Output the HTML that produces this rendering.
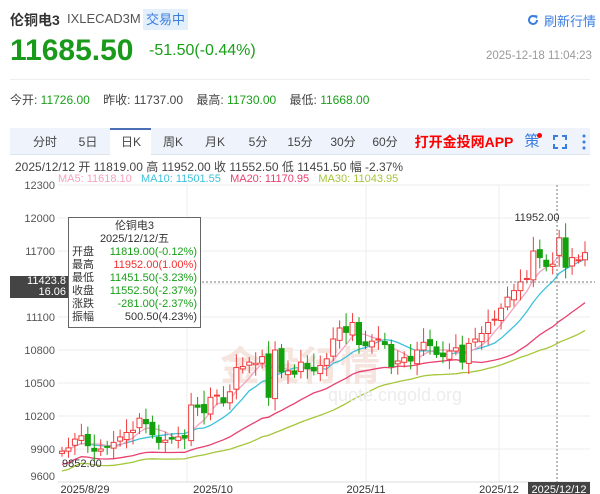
<!DOCTYPE html>
<html><head><meta charset="utf-8"><style>
*{margin:0;padding:0;box-sizing:border-box}
body{width:600px;height:494px;background:#fff;font-family:"Liberation Sans","Noto Sans CJK SC",sans-serif;position:relative;overflow:hidden;color:#333}
.a{position:absolute;white-space:nowrap}
.g{color:#1aa01a}.r{color:#f23030}
.tabs{position:absolute;left:10px;top:128px;width:580px;height:27px;background:#eef3fc;border-bottom:1px solid #dde4f0}
.tab{position:absolute;top:0;height:27px;line-height:28px;font-size:12px;color:#444;text-align:center;transform:translateX(-50%)}
</style></head><body>
<div class="a" style="left:10px;top:10px;font-size:14px;font-weight:bold;color:#333">伦铜电3</div>
<div class="a" style="left:67px;top:11px;font-size:13px;color:#555">IXLECAD3M</div>
<div class="a" style="left:143px;top:9px;width:45px;height:21px;background:#e3effb;color:#3a7ee0;font-size:13px;line-height:21px;text-align:center">交易中</div>
<svg class="a" style="left:527px;top:14px" width="12" height="12" viewBox="0 0 12 12"><path d="M10 6a4 4 0 1 1-1.2-2.9" fill="none" stroke="#3a7ee0" stroke-width="2"/><path d="M7 1l3.5 0.5-0.5 3.5z" fill="#3a7ee0"/></svg>
<div class="a" style="left:544px;top:11px;font-size:13px;color:#3a7ee0">刷新行情</div>
<div class="a g" style="left:10px;top:34px;font-size:30px;font-weight:bold;color:#1a9a1a">11685.50</div>
<div class="a g" style="left:149px;top:42px;font-size:16px">-51.50(-0.44%)</div>
<div class="a" style="left:486px;top:50px;font-size:11.5px;color:#999">2025-12-18 11:04:23</div>
<div class="a" style="left:10px;top:79px;width:580px;height:1px;background:#eee"></div>
<div class="a" style="left:10px;top:91px;font-size:12px;color:#444">今开: <span class="g">11726.00</span>&nbsp;&nbsp;&nbsp; 昨收: 11737.00&nbsp;&nbsp;&nbsp; 最高: <span class="g">11730.00</span>&nbsp;&nbsp;&nbsp; 最低: <span class="g">11668.00</span></div>
<div class="tabs">
<div class="a" style="left:100px;top:0;width:41px;height:27px;background:#fff;border-top:2px solid #4a6fb5"></div>
<div class="tab" style="left:35px">分时</div>
<div class="tab" style="left:78px">5日</div>
<div class="tab" style="left:121px">日K</div>
<div class="tab" style="left:163px">周K</div>
<div class="tab" style="left:205px">月K</div>
<div class="tab" style="left:248px">5分</div>
<div class="tab" style="left:290px">15分</div>
<div class="tab" style="left:333px">30分</div>
<div class="tab" style="left:375px">60分</div>
<div class="tab" style="left:454px;color:#f00;font-weight:bold;font-size:14px">打开金投网APP</div>
<div class="tab" style="left:522px;color:#3a7ee0;font-size:15px">策</div>
<div class="a" style="left:527px;top:5px;width:5px;height:5px;border-radius:50%;background:#f00"></div>
<svg class="a" style="left:543px;top:7px" width="14" height="14" viewBox="0 0 14 14"><path d="M1 5V1h4M9 1h4v4M13 9v4H9M5 13H1V9" fill="none" stroke="#3a7ee0" stroke-width="2"/></svg>
<svg class="a" style="left:572px;top:6px" width="4" height="16"><circle cx="2" cy="2" r="1.5" fill="#3a7ee0"/><circle cx="2" cy="8" r="1.5" fill="#3a7ee0"/><circle cx="2" cy="14" r="1.5" fill="#3a7ee0"/></svg>
</div>
<div class="a" style="left:15px;top:158px;font-size:12px;color:#444">2025/12/12 开 11819.00 高 11952.00 收 11552.50 低 11451.50 幅 -2.37%</div>
<div class="a" style="left:58px;top:173px;font-size:11px"><span style="color:#f5a3bf">MA5: 11618.10</span>&nbsp;&nbsp; <span style="color:#3ec2dc">MA10: 11501.55</span>&nbsp;&nbsp; <span style="color:#e8416f">MA20: 11170.95</span>&nbsp;&nbsp; <span style="color:#a5c63a">MA30: 11043.95</span></div>
<svg id="ch" class="a" style="left:0;top:180px" width="600" height="314"></svg>
<div class="a" style="left:10px;top:276px;width:58px;height:22px;background:#444;color:#fff;font-size:11px;line-height:11px;text-align:right;padding-right:2px;padding-top:0">11423.8<br>16.06</div>
<div class="a" style="left:68px;top:217px;width:133px;height:111px;border:1px solid #666;background:#fff;font-size:11px;line-height:13px;padding:2px 3px">
<div style="text-align:center">伦铜电3</div><div style="text-align:center">2025/12/12/五</div>
<div>开盘<span class="g" style="float:right">11819.00(-0.12%)</span></div>
<div>最高<span class="r" style="float:right">11952.00(1.00%)</span></div>
<div>最低<span class="g" style="float:right">11451.50(-3.23%)</span></div>
<div>收盘<span class="g" style="float:right">11552.50(-2.37%)</span></div>
<div>涨跌<span class="g" style="float:right">-281.00(-2.37%)</span></div>
<div>振幅<span style="float:right">500.50(4.23%)</span></div>
</div>
<script>
var s=document.getElementById('ch'),h='';
function Y(p){return 218+(12000-p)*0.11-180}
var lv=[12300,12000,11700,11400,11100,10800,10500,10200,9900];
lv.forEach(function(p){var y=Y(p);h+='<line x1="58" x2="590" y1="'+y+'" y2="'+y+'" stroke="#eee"/>';if(p!=11400)h+='<text x="55" y="'+(y+4)+'" font-size="11" fill="#555" text-anchor="end">'+p+'</text>'});
h+='<text x="55" y="'+(476-180+4)+'" font-size="11" fill="#555" text-anchor="end">9600</text>';
[187,366,499].forEach(function(x){h+='<line x1="'+x+'" x2="'+x+'" y1="5" y2="302" stroke="#eee"/>'});
h+='<line x1="58" x2="590" y1="302" y2="302" stroke="#ddd"/>';
h+='<text x="300" y="200" font-size="40" fill="#f6e4de" font-weight="bold" text-anchor="middle">金投行情</text>';
var C=[9880,9910,9990,10020,9930,9880,9900,9920,9960,10010,10050,10070,10180,10130,10030,9960,9980,9990,10010,10000,10300,10280,10230,10370,10390,10320,10420,10640,10650,10690,10680,10740,10370,10800,10600,10610,10580,10690,10630,10610,10660,10720,10900,11000,10960,11050,10850,10840,10880,10900,10850,10650,10700,10730,10700,10800,10870,10840,10760,10740,10790,10820,10690,10860,10900,10950,11050,11080,11180,11280,11340,11420,11450,11700,11640,11560,11580,11820,11552,11640,11620,11685];
var n=C.length,dx=(585-62)/(n-1),O=[];
for(var i=0;i<n;i++){O[i]=i?C[i-1]+((i*37)%5-2)*12:9860}
O[77]=11660;O[78]=11819;
function ma(k,col){var d='';for(var i=0;i<n;i++){var a=0,m=Math.min(k,i+1);for(var j=0;j<m;j++)a+=C[i-j];a/=m;var off=k>=20?(k==20?-120:-180):0;d+=(i?'L':'M')+(62+i*dx).toFixed(1)+' '+Y(a+off).toFixed(1)}h+='<path d="'+d+'" fill="none" stroke="'+col+'" stroke-width="1.3"/>'}
ma(30,'#a5c63a');ma(20,'#e8416f');ma(10,'#3ec2dc');ma(5,'#f5a3bf');
h+='<text x="395" y="221" font-size="18" fill="#ececec" text-anchor="middle">quote.cngold.org</text>';
for(var i=0;i<n;i++){var x=62+i*dx,o=O[i],c=C[i],up=c>=o,hi=Math.max(o,c)+40+(i*53)%90,lo=Math.min(o,c)-30-(i*29)%80;if(i==78){hi=11952;lo=11451}
var col=up?'#f23a3a':'#13a10e',t=Y(Math.max(o,c)),b=Y(Math.min(o,c));if(b-t<1)b=t+1;
h+='<line x1="'+x+'" x2="'+x+'" y1="'+Y(hi)+'" y2="'+Y(lo)+'" stroke="'+col+'"/>';
h+='<rect x="'+(x-2.5)+'" y="'+t+'" width="5" height="'+(b-t)+'" fill="'+(up?'#fff':col)+'" stroke="'+col+'"/>'}
h+='<line x1="557" x2="557" y1="5" y2="302" stroke="#777" stroke-dasharray="2,2"/>';
h+='<line x1="58" x2="595" y1="'+(282-180)+'" y2="'+(282-180)+'" stroke="#777" stroke-dasharray="2,2"/>';
h+='<text x="537" y="'+(218-180+3)+'" font-size="11" fill="#333" text-anchor="middle">11952.00</text>';
h+='<text x="62" y="'+(463-180+4)+'" font-size="11" fill="#333">9852.00</text>';
[['2025/8/29',85],['2025/10',213],['2025/11',366],['2025/12',499]].forEach(function(t){h+='<text x="'+t[1]+'" y="313" font-size="11" fill="#333" text-anchor="middle">'+t[0]+'</text>'});
h+='<rect x="528" y="302" width="62" height="12" fill="#444"/><text x="559" y="313" font-size="11" fill="#fff" text-anchor="middle">2025/12/12</text>';
s.innerHTML=h;
</script>
</body></html>
